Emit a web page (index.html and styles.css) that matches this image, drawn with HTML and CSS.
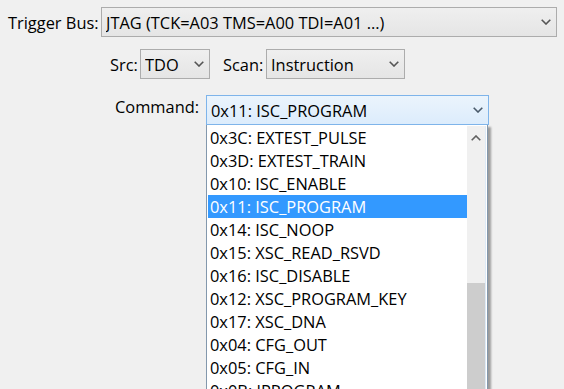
FILE: index.html
```html
<!DOCTYPE html>
<html>
<head>
<meta charset="utf-8">
<link rel="stylesheet" href="styles.css">
</head>
<body>
<div class="panel">
  <div class="row row-bus">
    <span class="label">Trigger Bus:</span>
    <div class="combo combo-bus">
      <span class="value">JTAG (TCK=A03 TMS=A00 TDI=A01 ...)</span>
      <svg class="chev" width="10" height="6" viewBox="0 0 10 6"><path d="M0.7 0.7 L5 5 L9.3 0.7" fill="none" stroke="#555" stroke-width="1.6"/></svg>
    </div>
  </div>
  <div class="row row-src">
    <span class="label">Src:</span>
    <div class="combo combo-src">
      <span class="value">TDO</span>
      <svg class="chev" width="10" height="6" viewBox="0 0 10 6"><path d="M0.7 0.7 L5 5 L9.3 0.7" fill="none" stroke="#555" stroke-width="1.6"/></svg>
    </div>
    <span class="label label-scan">Scan:</span>
    <div class="combo combo-scan">
      <span class="value">Instruction</span>
      <svg class="chev" width="10" height="6" viewBox="0 0 10 6"><path d="M0.7 0.7 L5 5 L9.3 0.7" fill="none" stroke="#555" stroke-width="1.6"/></svg>
    </div>
  </div>
  <div class="row row-cmd">
    <span class="label">Command:</span>
    <div class="cmd-wrap">
      <div class="combo combo-cmd">
        <span class="value">0x11: ISC_PROGRAM</span>
        <svg class="chev" width="10" height="6" viewBox="0 0 10 6"><path d="M0.7 0.7 L5 5 L9.3 0.7" fill="none" stroke="#4a5a6a" stroke-width="1.6"/></svg>
      </div>
      <div class="popup">
        <ul class="items">
          <li>0x3C: EXTEST_PULSE</li>
          <li>0x3D: EXTEST_TRAIN</li>
          <li>0x10: ISC_ENABLE</li>
          <li class="sel">0x11: ISC_PROGRAM</li>
          <li>0x14: ISC_NOOP</li>
          <li>0x15: XSC_READ_RSVD</li>
          <li>0x16: ISC_DISABLE</li>
          <li>0x12: XSC_PROGRAM_KEY</li>
          <li>0x17: XSC_DNA</li>
          <li>0x04: CFG_OUT</li>
          <li>0x05: CFG_IN</li>
          <li>0x0B: JPROGRAM</li>
        </ul>
        <div class="scrollbar">
          <div class="sb-up">
            <svg width="10" height="6" viewBox="0 0 10 6"><path d="M0.7 5.3 L5 1 L9.3 5.3" fill="none" stroke="#606060" stroke-width="1.6"/></svg>
          </div>
          <div class="sb-track"></div>
          <div class="sb-thumb"></div>
        </div>
      </div>
    </div>
  </div>
</div>
</body>
</html>
```
FILE: styles.css
```css
html, body {
  margin: 0;
  padding: 0;
  background: #f0f0f0;
  width: 564px;
  height: 389px;
  overflow: hidden;
}
.panel {
  font-family: "Open Sans", "Noto Sans", sans-serif;
  font-size: 16.4px;
  color: #000;
  padding-top: 7px;
}
.row {
  display: flex;
  align-items: center;
}
.row-bus {
  padding-left: 8px;
}
.row-bus .label {
  width: 93px;
  white-space: nowrap;
}
.row-src {
  margin-top: 12px;
  padding-left: 110px;
}
.row-src .label {
  width: 30px;
}
.label-scan {
  margin-left: 13px;
  width: 43px !important;
}
.row-cmd {
  margin-top: 16px;
  padding-left: 115px;
  align-items: flex-start;
}
.row-cmd .label {
  width: 91px;
  line-height: 24px;
  white-space: nowrap;
}
.combo {
  box-sizing: border-box;
  height: 30px;
  border: 1px solid #acacac;
  background: linear-gradient(#efefef, #e5e5e5);
  display: flex;
  align-items: center;
  padding-left: 4px;
  padding-right: 5px;
}
.combo .value {
  flex: 1;
  white-space: nowrap;
  overflow: hidden;
}
.combo .chev {
  flex: none;
}
.combo-bus {
  width: 456px;
}
.combo-src {
  width: 70px;
}
.combo-scan {
  width: 139px;
}
.cmd-wrap {
  position: relative;
}
.combo-cmd {
  width: 283px;
  border-color: #7eb4ea;
  background: linear-gradient(#ebf4fc, #dcecfc);
}
.popup {
  position: absolute;
  left: 0;
  top: 30px;
  width: 282px;
  height: 264px;
  overflow: hidden;
  box-sizing: border-box;
  background: #fff;
  border: 1px solid #8398ad;
  border-top: none;
  border-bottom: none;
  box-shadow: 3px 2px 2px rgba(0, 0, 0, 0.35);
  display: flex;
  padding: 1px 1px 0 1px;
}
.items {
  list-style: none;
  margin: 0;
  padding: 0;
  flex: 1;
}
.items li {
  height: 23px;
  line-height: 23px;
  padding-left: 2px;
  white-space: nowrap;
}
.items li.sel {
  background: #3399ff;
  color: #fff;
}
.scrollbar {
  width: 18px;
  display: flex;
  flex-direction: column;
  background: #f0f0f0;
  border-right: 1px solid #ddeaf7;
}
.sb-up {
  height: 23px;
  flex: none;
  display: flex;
  align-items: center;
  justify-content: center;
}
.sb-track {
  height: 134px;
  flex: none;
}
.sb-thumb {
  flex: 1;
  background: #cdcdcd;
}
```
